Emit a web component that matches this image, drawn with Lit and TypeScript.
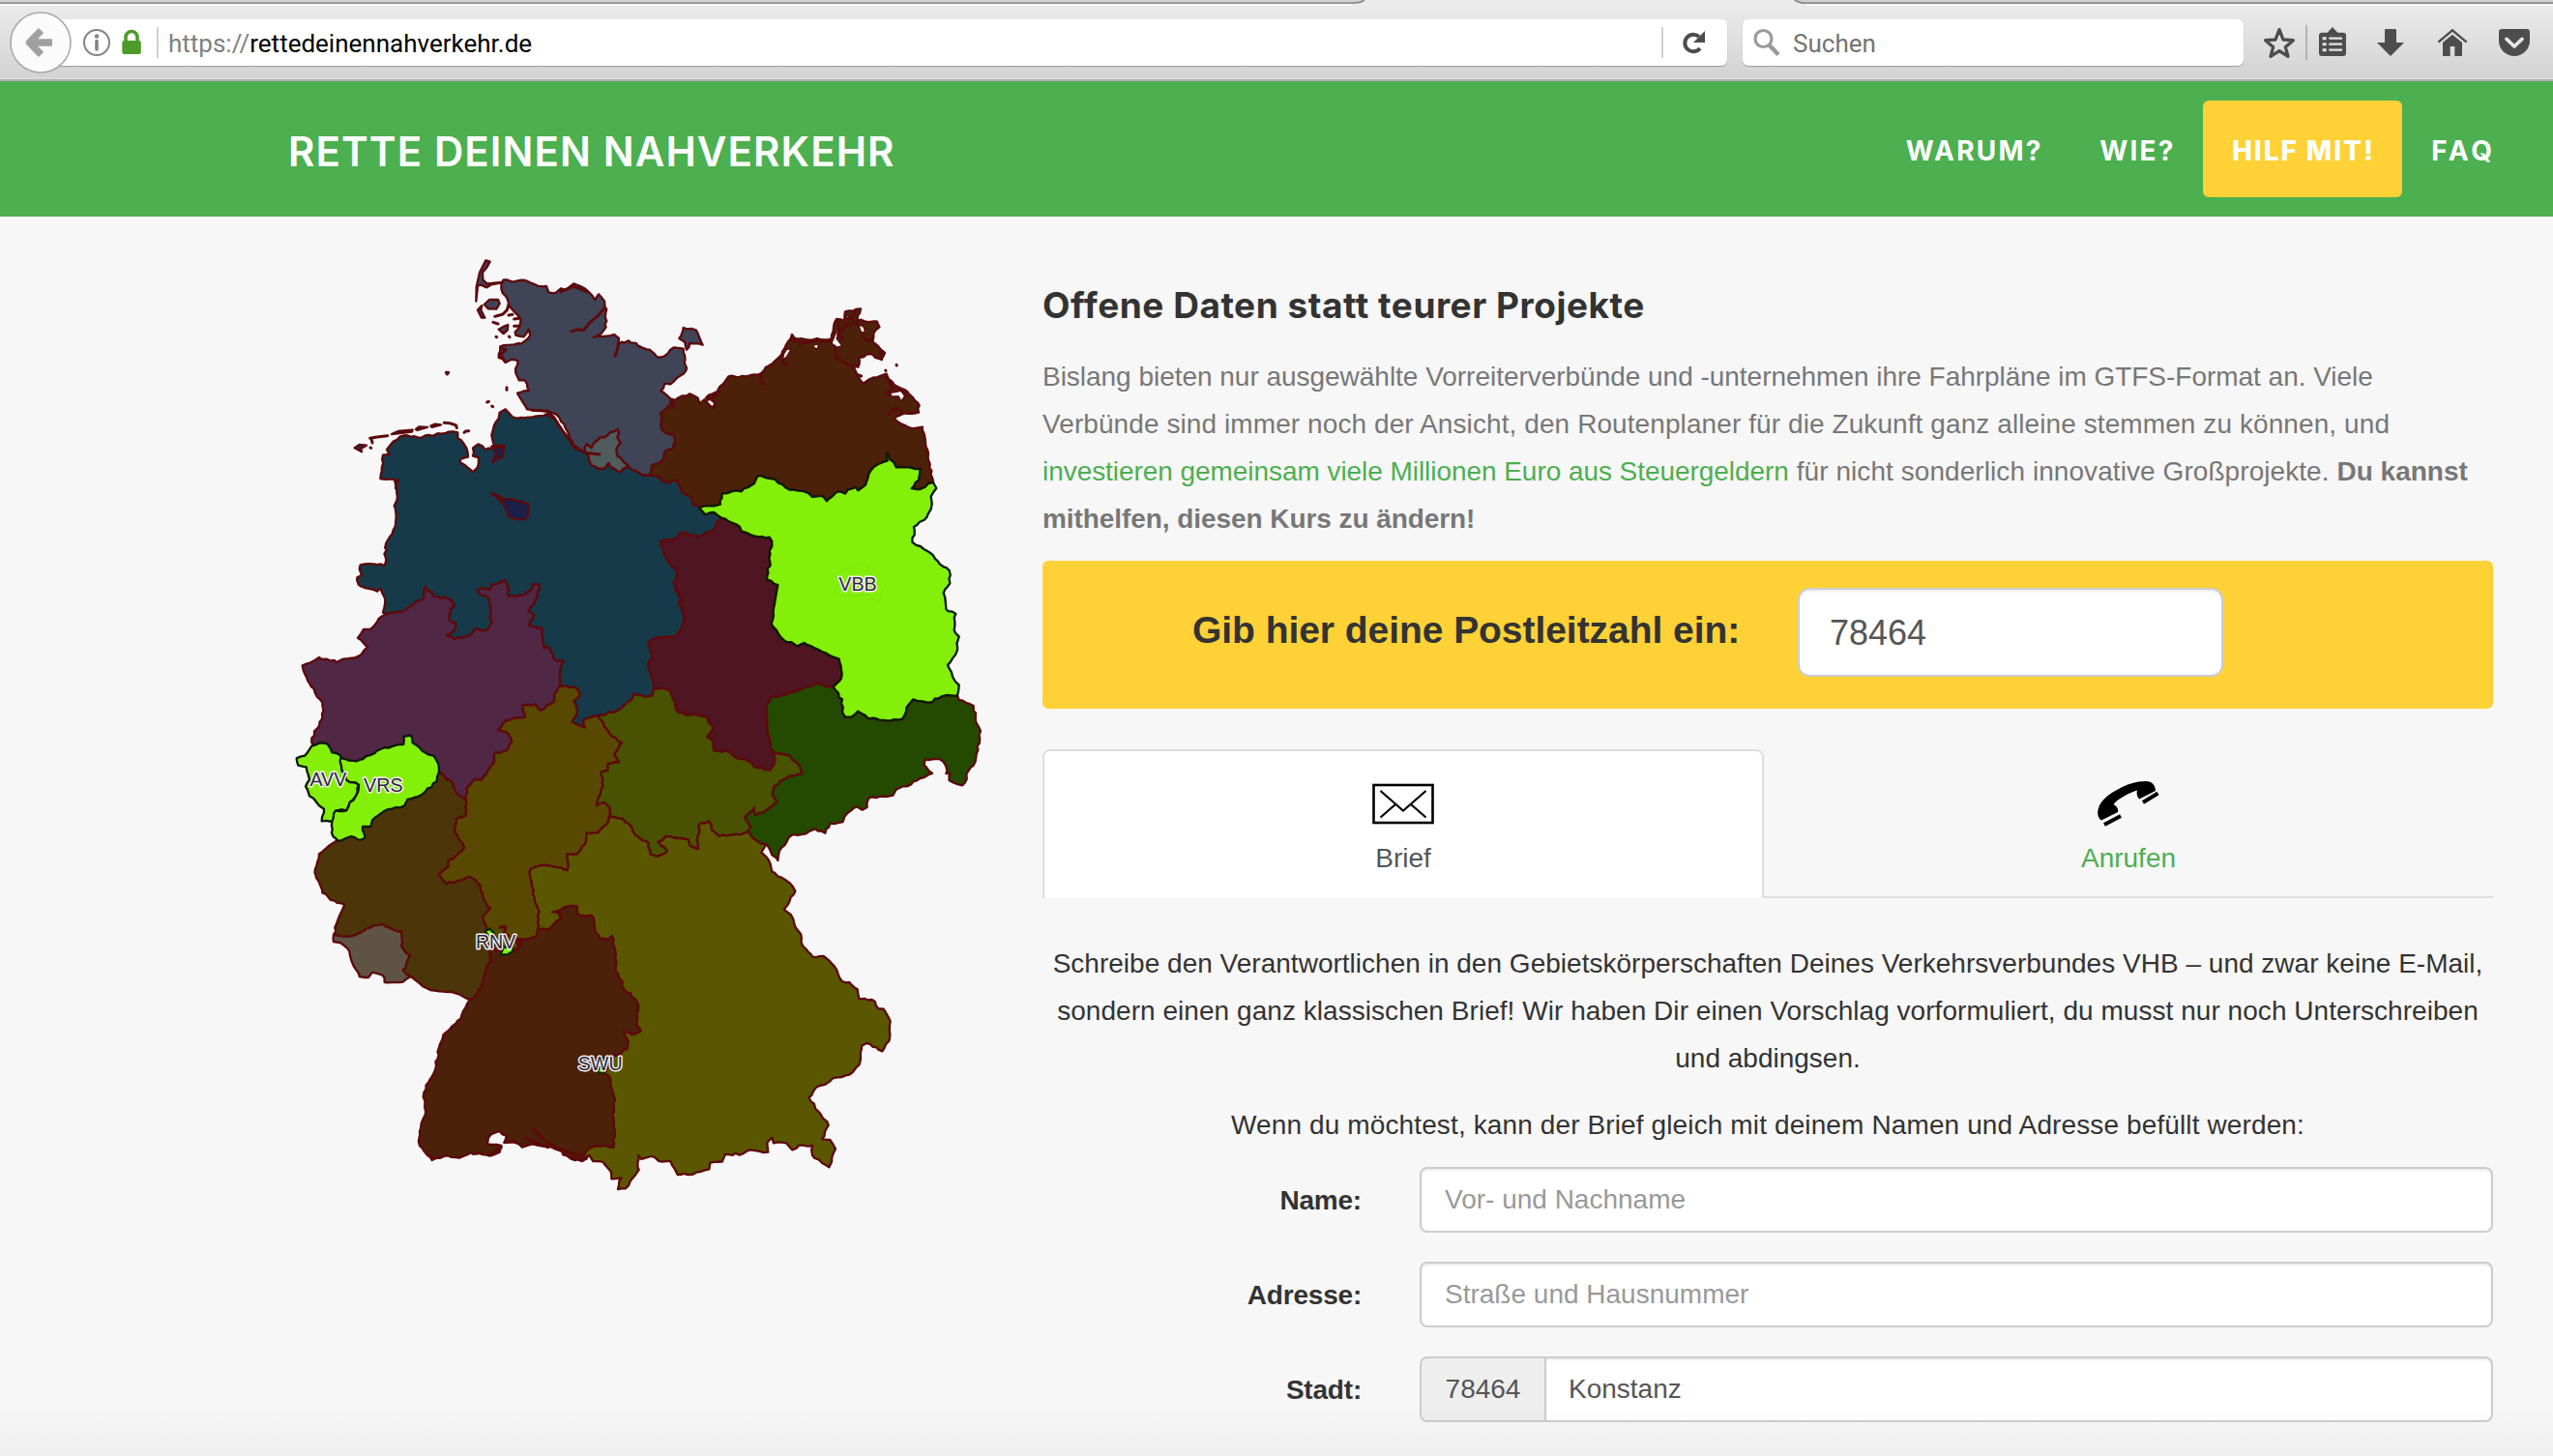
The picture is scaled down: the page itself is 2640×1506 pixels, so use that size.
import { LitElement, html, css, svg } from "lit";
import { customElement } from "lit/decorators.js";

type Pt = [number, number];

/* ---------- Map geometry: borders are stored once as arcs and shared by neighbours ---------- */

let seed = 7;
const rnd = () => {
  seed = (seed * 16807) % 2147483647;
  return seed / 2147483647 - 0.5;
};

// Map sheet offsets inside the 2300 x 3200 drawing space.
const SHEETS: Record<string, Pt> = {
  a: [0, 0],
  b: [1080, 120],
  c: [0, 1050],
  d: [1080, 1050],
  e: [30, 1950],
  f: [1050, 1950],
};

// "a 1,2 3,4 | b 5,6" -> absolute points
const pts = (src: string): Pt[] =>
  src.split("|").flatMap((part) => {
    const [sheet, ...rest] = part.trim().split(/\s+/);
    const [ox, oy] = SHEETS[sheet];
    return rest.map((p) => {
      const [x, y] = p.split(",").map(Number);
      return [x + ox, y + oy] as Pt;
    });
  });

// Adds small irregularities so that borders look surveyed instead of ruled.
const rough = (p: Pt[], amp = 6): Pt[] => {
  const out: Pt[] = [p[0]];
  for (let i = 1; i < p.length; i++) {
    const [x0, y0] = p[i - 1];
    const [x1, y1] = p[i];
    const n = Math.floor(Math.hypot(x1 - x0, y1 - y0) / 11);
    for (let k = 1; k < n; k++) {
      const t = k / n;
      out.push([x0 + (x1 - x0) * t + rnd() * amp, y0 + (y1 - y0) * t + rnd() * amp]);
    }
    out.push([x1, y1]);
  }
  return out;
};

const ARC_SRC: Record<string, string> = {
  shWest:
    "a 945,655 910,632 895,600 865,545 830,525 765,520 750,495 735,470 770,462 758,430 740,430 730,408 737,370 715,366 698,375 677,360 682,325 748,316 775,290 770,272 755,295 730,290 728,280 742,262 745,240 730,222 710,200 705,180 685,145 692,118 720,125 760,120 790,133 825,138 832,157 855,158 870,145 885,150 910,130 950,150 975,180 987,163 998,175 1012,210 1010,265 995,285 970,297 1035,288 1050,300 1048,318 1080,307 | b 30,203 65,215 88,238 110,236 140,208 170,212 178,280 130,322 112,320 100,343 130,368",
  shMv: "b 130,368 130,385 100,412 102,460 120,475 140,480 145,500 138,522 115,528 110,553 72,575 65,605",
  shNi: "b 65,605 45,605 20,590 0,580 | a 1080,697",
  hhNorth: "a 945,655 950,628 965,640 985,615 1015,600 1045,583 1050,590 1045,608 1055,625 1042,645 1045,665 1080,697",
  hhSouth: "a 1080,697 1055,715 1035,705 1018,688 1005,705 985,705 965,695 955,665 945,655",
  niCoast:
    "a 945,655 910,638 885,600 850,548 825,535 780,545 722,545 698,520 680,530 668,560 655,600 660,640 635,645 613,628 597,640 597,665 615,670 612,700 597,715 580,700 558,685 558,675 582,668 577,640 560,615 550,610 550,592 520,590 440,607 380,602 350,620 330,645 338,660 318,662 310,735 368,740 355,745 362,800 353,820 358,865 350,895 328,935 323,1005 290,1000 248,1003 245,1015 252,1035 238,1042 243,1065 300,1085 310,1075 325,1110 318,1150 325,1157",
  niNrw:
    "c 325,107 345,100 380,98 410,78 445,57 450,20 475,50 520,58 540,80 527,90 525,125 545,135 540,155 517,172 540,183 590,170 605,150 635,157 658,130 650,120 650,75 645,55 615,40 612,28 650,30 655,15 695,0 705,15 707,50 755,47 780,30 785,12 803,15 797,50 770,95 787,110 772,140 810,150 818,210 835,210 855,250 878,252 868,280 865,330",
  niHe: "c 865,330 885,328 920,337 930,355 910,375 920,415 903,440 945,458 940,435 965,425 985,420",
  niTh: "c 985,420 1040,408 1065,390 1085,375 1095,353 1130,362 | d 75,357 78,335",
  niSt: "d 78,335 70,300 60,265 75,235 60,195 85,180 145,175 165,150 172,110 155,70 165,60 145,20 | b 165,995 155,975 142,945 150,900 130,885 108,845 100,810 150,800 160,783 225,793 268,770 275,750 290,738",
  niBb: "b 290,738 265,720 238,727 220,705",
  niMv: "b 220,705 200,695 195,675 165,655 150,620 120,628 85,608 65,605",
  mvCoast:
    "b 130,368 145,372 150,367 190,352 215,365 220,383 235,370 262,395 268,380 240,365 275,345 295,320 310,298 365,298 412,288 425,270 465,240 495,190 507,168 515,180 570,185 630,180 645,120 670,125 672,97 720,88 710,125 770,127 778,145 760,165 757,190 795,225 783,245 755,228 715,240 715,262 695,272 728,320 745,308 785,295 800,290 825,325 865,345 902,388 900,410 855,412 825,427 845,445 880,460 912,455 922,515 935,570 945,627",
  mvBb: "b 945,627 930,630 905,648 878,645 900,620 905,585 890,585 870,580 830,580 810,555 803,535 803,560 775,570 745,600 735,635 712,652 705,642 680,650 672,662 650,655 615,685 605,672 570,672 545,655 490,645 475,632 440,615 400,607 390,630 350,655 320,655 290,662 285,695 265,700 245,700 220,705",
  bbEast:
    "b 945,627 955,645 938,670 938,710 925,735 885,765 887,790 880,812 905,825 935,845 965,880 995,900 997,940 977,970 985,1020 1015,1035 1010,1085 1025,1105 | d 1015,230 990,263 1005,300 1025,325 1020,358",
  bbSn: "d 1020,358 985,357 928,380 883,370 862,395 850,430 790,435 745,430 712,407 690,425 672,425 663,410 663,370 635,332",
  bbSt: "d 635,332 660,305 653,245 600,222 545,195 525,205 480,185 443,135 450,110 455,60 463,15 | b 430,930 430,895 440,885 437,840 445,825 437,797 415,795 380,790 350,778 345,765 300,740 290,738",
  stSn: "d 635,332 580,320 535,340 440,367 427,400 430,460 440,520 450,535",
  stTh: "d 450,535 455,560 440,590 390,580 370,560 330,550 310,532 265,530 262,500 243,487 263,460 245,430 235,422 155,412 145,390 130,345 100,335 78,335",
  snTh: "d 450,535 500,545 530,575 540,600 500,607 450,640 445,665 460,690 440,705 395,730 390,705 360,738 378,765 370,780",
  snOut:
    "d 1020,358 1025,372 1070,390 1077,440 1092,468 1078,550 1035,637 995,622 998,600 985,600 985,578 965,555 920,555 917,575 942,600 905,615 865,640 830,650 820,668 745,677 740,705 725,713 708,703 680,722 665,750 625,755 610,785 578,772 550,787 505,792 475,830 463,870 440,840 428,820",
  snBy: "d 428,820 410,818 385,800 370,780",
  thBy: "d 370,780 345,790 280,795 258,775 250,748 217,760 215,835 190,825 185,805 125,795 92,812 120,840 90,858 67,850 62,815 20,790 0,757 | c 1060,740 1020,735",
  heTh: "c 1020,735 1020,705 1005,690 980,700 1000,640 995,595 1015,590 1015,570 1050,565 1035,540 1058,505 1020,475 990,430 985,420",
  heNrw: "c 865,330 850,355 850,375 805,405 790,385 750,390 760,425 700,435 675,465 705,475 718,500 700,530 665,535 660,570 625,620 600,620 578,645 575,680",
  nrwVrs: "c 575,680 545,660 535,630 495,597 440,640 395,665",
  nrwRest: "c 395,665 300,670 190,600 97,505",
  nrwWest: "c 97,505 97,490 130,430 130,380 95,330 75,290 68,265 105,250 120,240 175,255 250,232 270,207 240,180 258,153 280,152 300,130 325,107",
  rpNorth: "c 395,665 300,700 240,760 160,818",
  rpHe: "c 575,680 575,730 545,740 540,780 570,830 545,855 520,870 520,890 490,912 515,943 590,922 620,950 630,990 650,1020 627,1045 640,1085",
  bwHe: "c 640,1085 | e 640,250 690,255 710,240 700,215 718,215 735,215 765,205 768,185",
  heBy: "c 1020,735 1015,755 985,785 950,783 945,820 920,850 890,850 890,900 825,885 775,897 780,950 790,1000 803,1030 | e 768,185",
  bwBy: "e 768,185 800,185 825,160 840,150 830,130 815,130 850,115 890,112 893,140 935,140 945,185 960,215 985,215 1000,205 1010,260 1008,310 1030,345 1035,370 1070,400 1080,420 1075,480 1087,500 1060,510 1035,500 1048,530 1045,555 990,585 975,630 990,640 1008,710 1000,760 1005,800 1003,860 970,855 935,860 905,885 920,895 905,903",
  bwOut:
    "e 905,903 870,895 830,868 795,858 750,850 720,860 695,845 665,845 672,825 650,810 615,830 612,850 655,855 650,875 620,887 560,877 525,893 480,887 440,900 402,855 402,810 420,745 415,690 450,620 465,540 475,512 530,460 557,402",
  bwRp: "e 557,402 580,385 600,340 610,300 625,280 615,240 605,210 | c 640,1085",
  rpSouth: "e 557,402 500,378 435,372 400,350 375,330",
  slRp: "e 375,330 350,310 372,265 345,235 345,190 320,185 285,167 250,178 190,205 135,200",
  slOut: "e 135,200 135,222 155,225 180,245 190,280 215,330 243,333 255,317 285,325 293,348 350,347 375,330",
  rpWest: "e 135,200 150,150 168,105 125,92 100,70 78,10 | c 107,910 120,850 160,818",
  byOut:
    "e 905,903 928,885 940,903 970,905 995,935 997,958 1028,955 1017,990 1040,988 | f 62,930 60,885 70,897 100,888 135,905 160,903 165,915 182,945 215,945 240,938 280,928 283,908 320,905 330,882 385,880 400,870 463,875 460,845 475,830 480,847 520,847 538,868 560,853 600,855 600,885 652,922 660,905 672,865 655,837 630,835 650,792 620,750 590,705 620,670 640,665 665,645 715,635 745,605 753,545 768,537 817,562 838,530 842,470 820,430 805,430 785,402 745,400 740,370 715,348 692,345 660,290 635,267 600,268 570,235 565,200 545,170 540,150 512,122 530,95 547,65 530,40 475,5 | d 435,870 412,845 428,820",
  avv: "c 97,515 130,505 145,508 160,535 187,545 190,590 205,620 243,635 235,668 215,690 205,715 172,715 160,750 128,748 135,710 120,700 90,670 78,640 90,620 80,580 55,575 50,553 75,545 97,515",
  vrs: "c 187,552 235,562 280,543 310,525 350,515 382,510 382,485 405,482 410,505 440,530 475,545 492,585 485,625 440,665 395,680 385,700 345,710 320,718 285,745 280,765 255,765 262,800 240,805 220,795 180,810 163,795 160,750 172,715 205,715 215,690 235,668 243,635 205,620 190,590 187,552",
  bremen: "a 655,780 685,795 735,805 768,812 768,850 755,863 705,850 690,810 655,780",
  bhv: "a 655,635 695,633 688,670 658,685 670,660 655,635",
  berlin: "b 640,970 660,905 700,885 735,880 750,915 790,960 775,1000 740,975 680,980 640,970",
  fehmarn: "b 180,215 175,192 157,180 170,147 210,155 230,200 190,195 180,215",
};

const ARCS: Record<string, Pt[]> = Object.fromEntries(
  Object.entries(ARC_SRC).map(([k, v]) => [k, rough(pts(v), k === "berlin" ? 3 : 7)]),
);

// Joins arcs into a closed ring; a leading "-" walks an arc backwards.
const ring = (ids: string): string =>
  "M" +
  ids
    .split(" ")
    .flatMap((id) => (id[0] === "-" ? [...ARCS[id.slice(1)]].reverse() : ARCS[id]))
    .map(([x, y]) => `${x.toFixed(1)} ${y.toFixed(1)}`)
    .join("L") +
  "Z";

const line = (src: string): string => "M" + pts(src).map((p) => p.join(" ")).join("L");

const STATES: Array<[string, string]> = [
  ["#404457", "shWest shMv shNi -hhNorth"],
  ["#404457", "fehmarn"],
  ["#4f5b5c", "hhNorth hhSouth"],
  ["#173a4a", "niCoast niNrw niHe niTh niSt niBb niMv shNi hhSouth"],
  ["#4b210a", "mvCoast mvBb niMv -shMv"],
  ["#4f1522", "niSt -bbSt stSn stTh"],
  ["#244900", "bbSn stSn snTh -snBy -snOut"],
  ["#495200", "niTh -stTh snTh thBy heTh"],
  ["#502744", "niNrw heNrw nrwVrs nrwRest nrwWest"],
  ["#594900", "niHe -heTh heBy -bwHe -rpHe -heNrw"],
  ["#4d350a", "rpHe -bwRp rpSouth slRp rpWest -rpNorth -nrwVrs"],
  ["#5f5443", "slRp slOut"],
  ["#5a5700", "byOut snBy thBy heBy bwBy"],
  ["#4b210a", "bwHe bwBy bwOut bwRp"],
  ["#1a2048", "bremen"],
  ["#1a2048", "bhv"],
];

const NETWORKS: string[] = ["mvBb -niBb -bbSt -bbSn -bbEast", "avv", "vrs"];

// Islands and sand banks: [fill, outline]
const ISLANDS: Array<[string, string]> = [
  ["#404457", "a 637,58 650,62 640,80 627,95 628,118 640,130 690,126 655,133 640,142 622,134 612,137 607,185 608,140 618,95 637,58"],
  ["#404457", "a 632,195 648,180 675,180 680,192 670,209 645,208 632,195"],
  ["#404457", "a 612,212 625,198 622,212 634,236 624,236 612,212"],
  ["#404457", "a 677,272 695,262 706,258 704,275 692,285 677,272"],
  ["#173a4a", "a 230,640 245,630 267,632 250,642 252,652 230,640"],
  ["#173a4a", "a 345,597 365,588 410,584 408,590 345,597"],
  ["#173a4a", "a 420,582 430,574 456,576 425,585 420,582"],
  ["#173a4a", "a 466,572 480,566 498,568 470,576 466,572"],
];

const THICK: string[] = [
  "a 780,523 825,525 848,545 870,580 895,612 910,635 945,655 990,660",
  "a 870,155 910,138 950,155",
  "a 1005,205 985,230 960,250 940,275 925,272 903,278",
  "a 1048,318 1045,335 1038,355",
  "a 683,330 700,335 683,350 695,370",
  "a 665,232 690,225 703,212 708,195",
  "a 708,228 720,226", "a 725,240 740,238", "a 725,262 740,262",
  "a 660,250 675,255", "a 669,295 671,296", "a 709,294 711,296",
  "a 514,406 521,406 517,411 514,406",
  "a 702,452 702,460", "a 641,498 646,496", "a 656,510 659,512",
  "a 278,610 300,606 332,602", "a 283,615 285,624", "a 279,639 281,640",
  "a 508,562 525,563 545,570 547,578", "a 570,592 575,588 584,587",
  "a 360,745 358,765", "a 658,783 690,800", "a 690,635 665,640",
  "b 135,370 140,395", "b 245,370 265,362 282,345", "b 410,290 412,318 422,322",
  "b 475,245 482,260 492,260", "b 505,185 540,195 590,185 625,190",
  "b 645,125 655,150 650,165 680,135 690,140", "b 650,170 665,180", "b 640,205 645,240 680,262 712,268",
  "b 725,170 735,185 755,185", "b 700,275 708,292 722,297", "b 800,300 820,335 800,350 812,355",
  "b 808,415 830,395 850,410", "b 830,330 850,345 860,360", "b 782,225 785,245",
  "b 831,262 832,264", "b 797,279 798,280", "b 700,100 690,120 715,140",
  "e 650,178 668,175 665,195 678,205", "e 700,215 715,215 715,235 705,245",
  "e 753,803 790,840 830,862 880,880 905,885", "e 730,832 760,845 800,860", "e 665,845 695,840",
  "e 870,890 905,900 920,890", "e 625,880 655,860", "e 430,885 440,895", "e 835,130 840,150",
];

const LAGOONS: string[] = [
  "b 648,150 652,165 645,180 662,203 645,208 630,195 640,170",
  "b 490,215 505,212 490,238 478,246 482,228",
  "b 575,200 590,198 585,215 575,208",
  "b 528,202 536,202 533,210",
  "b 712,135 730,145 733,160 722,162",
  "b 808,350 835,345 850,340 858,358 845,375 838,360 815,360",
  "b 820,400 832,400 824,408",
  "b 675,112 682,108 682,122",
];

const LABELS: Array<[number, number, string]> = [
  [1791, 1084, "VBB"],
  [148, 1688, "AVV"],
  [319, 1706, "VRS"],
  [668, 2192, "RNV"],
  [992, 2571, "SWU"],
];

@customElement("network-map")
export class NetworkMap extends LitElement {
  static styles = css`
    :host { display: block; }
    .map { display: block; width: 767px; height: 1067px; overflow: visible; }
    .state { stroke: #5c0a0c; stroke-width: 7; stroke-linejoin: round; }
    .net { fill: #84f009; stroke: #0d1a05; stroke-width: 7; stroke-linejoin: round; }
    .mark { fill: none; stroke: #5c0a0c; stroke-width: 9; stroke-linecap: round; stroke-linejoin: round; }
    .lagoon { fill: #f7f7f7; stroke: #5c0a0c; stroke-width: 4; stroke-linejoin: round; }
    .city { fill: none; stroke: #7fea0c; stroke-width: 6; }
    .small { fill: #84f009; stroke: #0a2a05; stroke-width: 7; stroke-linejoin: round; }
    .label {
      font: 59px "Liberation Sans", Arial, sans-serif;
      text-anchor: middle; fill: #2b2b35; stroke: #f4eef4; stroke-width: 9;
      stroke-linejoin: round; paint-order: stroke;
    }
  `;
  render() {
    return html`<svg class="map" viewBox="0 0 2301 3201">
      ${STATES.map(([c, ids]) => svg`<path class="state" fill=${c} d=${ring(ids)} />`)}
      ${ISLANDS.map(([c, s]) => svg`<path class="state" fill=${c} d=${line(s) + "Z"} />`)}
      ${LAGOONS.map((s) => svg`<path class="lagoon" d=${line(s) + "Z"} />`)}
      ${THICK.map((s) => svg`<path class="mark" d=${line(s)} />`)}
      ${NETWORKS.map((ids) => svg`<path class="net" d=${ring(ids)} />`)}
      <path class="city" d=${ring("berlin")} />
      <path class="small" d=${line("e 605,190 618,182 630,192 640,215 665,240 692,235 690,252 675,262 653,262 660,245 630,225 605,190") + "Z"} />
      <path class="small" d=${line("e 970,580 975,600 972,630 955,628 962,600") + "Z"} />
      ${LABELS.map(([x, y, t]) => svg`<text class="label" x=${x} y=${y}>${t}</text>`)}
    </svg>`;
  }
}

@customElement("browser-bar")
export class BrowserBar extends LitElement {
  static styles = css`
    :host { display: block; font-family: Roboto, "Liberation Sans", sans-serif; }
    .bar {
      position: relative; box-sizing: border-box; height: 84px; padding: 20px 0 0 6px;
      display: flex; align-items: flex-start;
      background: linear-gradient(#ebebeb 5px, #d3d3d3 80px, #dadada 80px, #dadada 82px, #b0b0b0 82px);
    }
    .tabs { position: absolute; left: 0; top: 0; width: 2640px; height: 8px; }
    .field {
      display: flex; align-items: center; box-sizing: border-box; height: 48px; background: #fff;
      border-radius: 6px; box-shadow: 0 1px 1px #9d9d9d;
    }
    .back { flex: none; margin: -8px -28px 0 4px; z-index: 1; display: block; }
    .url { width: 1748px; padding-left: 44px; border-radius: 0 6px 6px 0; margin-left: -8px; }
    .search { width: 518px; margin-left: 16px; padding-left: 10px; }
    .rule { width: 2px; height: 32px; background: #d0d0d0; }
    .rule.first { margin-left: 14px; }
    .addr { flex: 1; font-size: 26px; color: #000; padding: 3px 0 0 10px; }
    .dim { color: #7f7f7f; }
    .hint { font-size: 26px; color: #737373; padding: 3px 0 0 12px; }
    .reload { margin: 0 21px 0 19px; display: block; }
    .icons { display: block; margin: -20px 0 0 -10px; width: 330px; height: 84px; flex: none; }
  `;
  render() {
    return html`<div class="bar">
      <svg class="tabs" viewBox="0 0 2640 8">
        <path d="M0 0H1411Q1407 3.5 1398 3.5H0Z" fill="#d2d2d2" />
        <path d="M1856 0Q1860 3.5 1868 3.5H2640V0Z" fill="#cfcfcf" />
        <path d="M0 3.2H1398Q1407 3 1411 0M1856 0Q1860 3.2 1868 3.2H2640" fill="none" stroke="#8b8b8b" stroke-width="1.8" />
        <path d="M0 5H1398M1868 5H2640" stroke="#f7f7f7" stroke-width="2" />
      </svg>
      <svg class="back" width="64" height="64" viewBox="0 0 64 64">
        <circle cx="32" cy="32" r="31" fill="#fbfbfb" stroke="#aaa" stroke-width="1.6" />
        <path d="M32.500 19.500L20.500 32L32.500 44.500M21 32H44" fill="none" stroke="#a0a0a0" stroke-width="7.500" stroke-linejoin="round" />
      </svg>
      <div class="field url">
        <svg width="66" height="32" viewBox="0 0 66 32">
          <circle cx="18" cy="16" r="13" fill="none" stroke="#848484" stroke-width="2" />
          <circle cx="18" cy="9.500" r="2.200" fill="#848484" />
          <path d="M18 14.500V23" stroke="#848484" stroke-width="3.600" stroke-linecap="round" />
          <path d="M48 16V10.500a6 6 0 0 1 12 0V16" fill="none" stroke="#4c9a27" stroke-width="3.600" />
          <rect x="44.300" y="14" width="19.500" height="14" rx="2" fill="#4c9a27" />
        </svg>
        <span class="rule first"></span>
        <span class="addr"><span class="dim">https://</span>rettedeinennahverkehr.de</span>
        <span class="rule"></span>
        <svg class="reload" width="26" height="28" viewBox="0 0 26 28">
          <path d="M19 20A8.800 8.800 0 1 1 18 8" fill="none" stroke="#4d4d4d" stroke-width="4" />
          <path d="M24 2V14H12Z" fill="#4d4d4d" />
        </svg>
      </div>
      <div class="field search">
        <svg width="30" height="30" viewBox="0 0 30 30">
          <circle cx="11.500" cy="11" r="8.500" fill="none" stroke="#9a9a9a" stroke-width="3.200" />
          <path d="M17 17L27 27.500" stroke="#9a9a9a" stroke-width="4.500" />
        </svg>
        <span class="hint">Suchen</span>
      </div>
      <svg class="icons" viewBox="0 0 990 252">
        <path d="M141 92L153 123L184 125L160 146L168 175L141 158L114 175L122 146L98 125L129 123Z" fill="none" stroke="#4d4d4d" stroke-width="10" stroke-linejoin="round" />
        <path d="M225 78V186" stroke="#b5b5b5" stroke-width="6" />
        <path d="M273 101H290L306 84L322 101H339Q348 101 348 110V165Q348 174 339 174H273Q264 174 264 165V110Q264 101 273 101Z" fill="#4d4d4d" />
        <path d="M295 119H336M295 137H336M295 155H336" stroke="#e4e4e4" stroke-width="7" />
        <path d="M275 119H287M275 137H287M275 155H287" stroke="#e4e4e4" stroke-width="9" />
        <path d="M468 94Q468 90 472 90H500Q504 90 504 94V132H528L486 174L444 132H468Z" fill="#4d4d4d" />
        <path d="M634 131L678 94L722 131" fill="none" stroke="#4d4d4d" stroke-width="7" />
        <path d="M648 132L678 107L708 132V174H685V144H671V174H648Z" fill="#4d4d4d" />
        <path d="M832 90H908Q918 90 918 100V126A48 48 0 0 1 822 126V100Q822 90 832 90Z" fill="#4d4d4d" />
        <path d="M846 121L870 144L894 121" fill="none" stroke="#e6e6e6" stroke-width="11" stroke-linecap="round" stroke-linejoin="round" />
      </svg>
    </div>`;
  }
}

@customElement("app-root")
export class AppRoot extends LitElement {
  static styles = css`
    :host {
      display: block; width: 2640px; height: 1506px; overflow: hidden; background: #f7f7f7;
      font: 28px/49px "Liberation Sans", Arial, sans-serif; color: #333;
      position: relative;
    }
    .head {
      box-sizing: border-box; height: 140px; background: #4caf50; color: #fff;
      display: flex; align-items: center; justify-content: space-between;
      padding: 0 31px 0 298px; font-family: Inter, "Open Sans", sans-serif;
    }
    .brand { font-size: 42px; font-weight: 600; letter-spacing: 1.1px; padding-top: 4px; }
    .nav { display: flex; }
    .link {
      height: 100px; line-height: 105px; padding: 0 28.5px 0 30px; border-radius: 6px;
      font-size: 28px; font-weight: 700; letter-spacing: 2.2px;
    }
    .hot { background: #fed136; font-weight: 800; letter-spacing: 1.9px; }
    .last { letter-spacing: 3.6px; }
    .main { display: flex; height: 1282px; padding-left: 290px; }
    .mapcol { width: 788px; padding-top: 26px; }
    .col { width: 1500px; padding-top: 67px; }
    .title {
      margin: 0 0 24px; height: 50px; font: 700 37px/49px Inter, "Open Sans", sans-serif;
      letter-spacing: 0.52px; white-space: nowrap;
    }
    .text { color: #777; white-space: nowrap; height: 196px; }
    .ln { display: block; width: max-content; }
    .green { color: #4caf50; }
    .plz {
      box-sizing: border-box; height: 153px; margin-top: 19px; padding-left: 155px; border-radius: 6px;
      background: #fed136; display: flex; align-items: flex-start;
    }
    .ask { width: 626px; font-size: 39px; font-weight: 700; letter-spacing: -0.05px; margin-top: 47px; white-space: nowrap; }
    .input {
      box-sizing: border-box; font: inherit; color: #555; background: #fff; border: 2px solid #ccc;
      border-radius: 8px; box-shadow: inset 0 2px 2px rgba(0, 0, 0, 0.075); height: 68px; padding: 0 24px;
      width: 1110px; margin: 0; outline: none;
    }
    .input::placeholder { color: #999; opacity: 1; }
    .big { width: 440px; height: 92px; font-size: 36px; padding: 2px 31px 0; margin-top: 28px; border-radius: 12px; }
    .tabs { display: flex; height: 154px; margin-top: 42px; }
    .tab {
      box-sizing: border-box; display: flex; flex-direction: column; align-items: center;
      border-bottom: 2px solid #ddd; flex: 1; padding-top: 31px;
    }
    .on { flex: none; width: 746px; background: #fff; border: 2px solid #ddd; border-bottom: 0; border-radius: 8px 8px 0 0; padding-top: 29px; color: #555; }
    .glyph { display: block; width: 66px; height: 50px; }
    .cap { height: 49px; margin-top: 7px; }
    .center { text-align: center; white-space: nowrap; }
    .center .ln { margin: 0 auto; }
    .intro { margin-top: 43px; }
    .note { margin-top: 20px; }
    .form { display: grid; grid-template-columns: 330px 1110px; column-gap: 60px; row-gap: 30px; margin-top: 19px; align-items: center; }
    .lab { text-align: right; font-weight: 700; letter-spacing: -0.2px; }
    .group { display: flex; }
    .addon {
      box-sizing: border-box; width: 129px; height: 68px; line-height: 64px; text-align: center; color: #555;
      background: #eee; border: 2px solid #ccc; border-right: 0; border-radius: 8px 0 0 8px;
    }
    .joined { width: 981px; border-radius: 0 8px 8px 0; padding-left: 23px; }
    .fade { position: absolute; left: 0; bottom: 0; width: 2640px; height: 56px; background: linear-gradient(rgba(0, 0, 0, 0), rgba(0, 0, 0, 0.03)); }
    .p1 { letter-spacing: -0.025px; }
    .p2 { letter-spacing: 0.088px; }
    .p3 { letter-spacing: 0.07px; }
    .p3 .green { letter-spacing: -0.055px; }
    .p3 b { letter-spacing: 0; }
    .p4 { letter-spacing: -0.07px; }
    .q1 { letter-spacing: 0.015px; }
    .q2 { letter-spacing: 0.045px; }
    .q4 { letter-spacing: 0.12px; }
  `;
  render() {
    return html`
      <browser-bar></browser-bar>
      <header class="head">
        <div class="brand">RETTE DEINEN NAHVERKEHR</div>
        <nav class="nav">
          <span class="link">WARUM?</span><span class="link">WIE?</span>
          <span class="link hot">HILF MIT!</span><span class="link last">FAQ</span>
        </nav>
      </header>
      <main class="main">
        <div class="mapcol"><network-map></network-map></div>
        <section class="col">
          <h4 class="title">Offene Daten statt teurer Projekte</h4>
          <div class="text">
            <span class="ln p1">Bislang bieten nur ausgewählte Vorreiterverbünde und -unternehmen ihre Fahrpläne im GTFS-Format an. Viele</span>
            <span class="ln p2">Verbünde sind immer noch der Ansicht, den Routenplaner für die Zukunft ganz alleine stemmen zu können, und</span>
            <span class="ln p3"><span class="green">investieren gemeinsam viele Millionen Euro aus Steuergeldern</span> für nicht sonderlich innovative Großprojekte. <b>Du kannst</b></span>
            <span class="ln p4"><b>mithelfen, diesen Kurs zu ändern!</b></span>
          </div>
          <div class="plz">
            <label class="ask">Gib hier deine Postleitzahl ein:</label>
            <input class="input big" value="78464" />
          </div>
          <div class="tabs">
            <div class="tab on">
              <svg class="glyph" viewBox="0 0 66 50">
                <rect x="2.500" y="6" width="61" height="39" fill="#fff" stroke="#000" stroke-width="2.600" />
                <path d="M9.500 12L33 32.500L56.500 12M9.500 39.500L25 26M56.500 39.500L41 26" fill="none" stroke="#000" stroke-width="2.200" />
              </svg>
              <span class="cap">Brief</span>
            </div>
            <div class="tab">
              <svg class="glyph" viewBox="0 0 66 50">
                <path d="M5 42.500C1 40 0.500 34 2 30C4 22 14 14 23 10C31 5 42 2 51 2C57 2 61 6 61 12L44 20.500C42 18 41 15 42 11.500C34 14 22 20 17.500 26C21 28 23 31 22 34Z" fill="#000" />
                <path d="M8 47L25 38M48 24L63.500 14.500" stroke="#000" stroke-width="4" />
              </svg>
              <span class="cap green">Anrufen</span>
            </div>
          </div>
          <div class="center intro">
            <span class="ln q1">Schreibe den Verantwortlichen in den Gebietskörperschaften Deines Verkehrsverbundes VHB – und zwar keine E-Mail,</span>
            <span class="ln q2">sondern einen ganz klassischen Brief! Wir haben Dir einen Vorschlag vorformuliert, du musst nur noch Unterschreiben</span>
            <span class="ln q3">und abdingsen.</span>
          </div>
          <div class="center note"><span class="ln q4">Wenn du möchtest, kann der Brief gleich mit deinem Namen und Adresse befüllt werden:</span></div>
          <div class="form">
            <label class="lab">Name:</label><input class="input" placeholder="Vor- und Nachname" />
            <label class="lab">Adresse:</label><input class="input" placeholder="Straße und Hausnummer" />
            <label class="lab">Stadt:</label>
            <div class="group"><span class="addon">78464</span><input class="input joined" value="Konstanz" /></div>
          </div>
        </section>
      </main>
      <div class="fade"></div>
    `;
  }
}
